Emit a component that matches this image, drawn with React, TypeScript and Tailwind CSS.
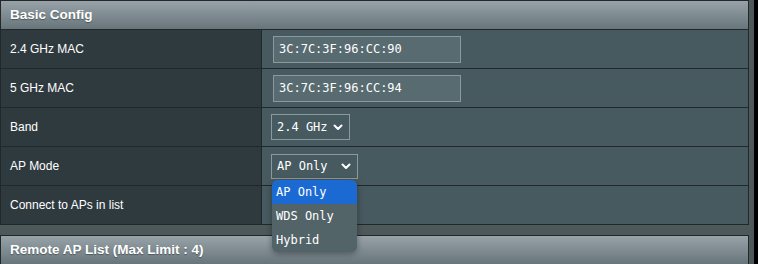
import React from "react";

const rows = [
  { label: "2.4 GHz MAC", kind: "input", value: "3C:7C:3F:96:CC:90" },
  { label: "5 GHz MAC", kind: "input", value: "3C:7C:3F:96:CC:94" },
  { label: "Band", kind: "band", value: "2.4 GHz" },
  { label: "AP Mode", kind: "mode", value: "AP Only" },
  { label: "Connect to APs in list", kind: "none", value: "" },
];

function Chevron() {
  return (
    <svg width="10" height="7" viewBox="0 0 10 7" className="shrink-0">
      <path d="M1.5 1.5 L5 5 L8.5 1.5" fill="none" stroke="#fff" strokeWidth="2" strokeLinecap="round" strokeLinejoin="round" />
    </svg>
  );
}

function Header({ title }: { title: string }) {
  return (
    <div className="h-[28px] flex items-center pl-[9px] bg-gradient-to-b from-[#97a3a8] to-[#68757a] text-white text-[13.5px] font-bold [text-shadow:0_1px_1px_rgba(0,0,0,0.35)]">
      {title}
    </div>
  );
}

export default function App() {
  return (
    <div className="w-[758px] h-[264px] overflow-hidden flex bg-[#4d585b]" style={{ fontFamily: '"Liberation Sans", Arial, sans-serif' }}>
      <div className="w-[754px] flex flex-col">
        <div className="w-[749px] border border-[#222829]">
          <Header title="Basic Config" />
          {rows.map((r) => (
            <div key={r.label} className="flex h-[39px] border-t border-[#222829]">
              <div className="w-[261px] shrink-0 bg-[#2f3a3f] border-r border-[#222829] flex items-center pl-[9px] text-white text-[12px]">
                {r.label}
              </div>
              <div className="flex-1 bg-[#475a5f] flex items-center" style={{ fontFamily: '"DejaVu Sans Mono", monospace' }}>
                {r.kind === "input" && (
                  <div className="ml-[11px] w-[188px] h-[27px] border border-[#8b989c] bg-[#586b70] flex items-center pl-[5px] text-white text-[12px]">
                    {r.value}
                  </div>
                )}
                {r.kind === "band" && (
                  <div className="ml-[9px] w-[79px] h-[26px] border border-[#8b989c] bg-[#475a5f] flex items-center justify-between pl-[5px] pr-[6px] text-white text-[12px]">
                    <span>{r.value}</span>
                    <Chevron />
                  </div>
                )}
                {r.kind === "mode" && (
                  <div className="relative ml-[9px]">
                    <div className="w-[87px] h-[25px] border border-[#8b989c] bg-[#475a5f] flex items-center justify-between pl-[5px] pr-[6px] text-white text-[12px]">
                      <span>{r.value}</span>
                      <Chevron />
                    </div>
                    <div className="absolute left-[1px] top-[26px] w-[85px] rounded-[6px] bg-[#536469] shadow-[0_2px_6px_rgba(0,0,0,0.35)] overflow-hidden text-white text-[12px] z-10">
                      <div className="h-[24px] flex items-center pl-[4px] bg-[#1b6ad3]">AP Only</div>
                      <div className="h-[24px] flex items-center pl-[4px]">WDS Only</div>
                      <div className="h-[24px] flex items-center pl-[4px]">Hybrid</div>
                    </div>
                  </div>
                )}
              </div>
            </div>
          ))}
        </div>
        <div className="mt-[10px] w-[749px] border border-[#222829]">
          <Header title="Remote AP List (Max Limit : 4)" />
        </div>
      </div>
      <div className="w-[4px] bg-black" />
    </div>
  );
}
